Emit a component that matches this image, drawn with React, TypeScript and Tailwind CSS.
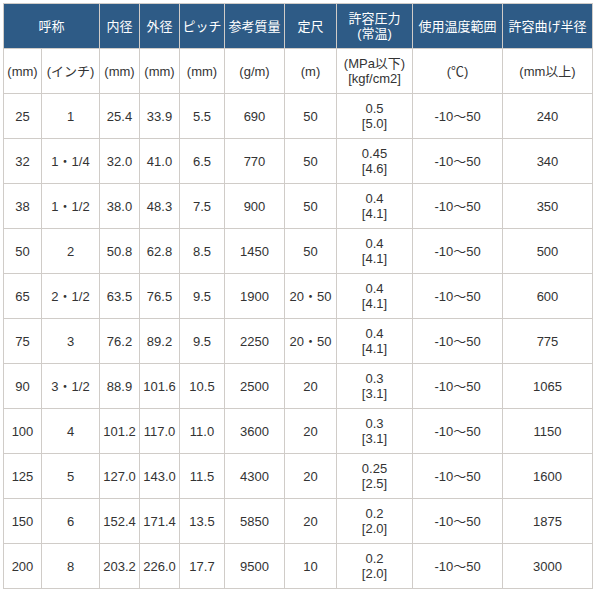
import React from "react";

const rows: [string, string, string, string, string, string, string, string, string, string][] = [
  ["25", "1", "25.4", "33.9", "5.5", "690", "50", "0.5|[5.0]", "-10～50", "240"],
  ["32", "1・1/4", "32.0", "41.0", "6.5", "770", "50", "0.45|[4.6]", "-10～50", "340"],
  ["38", "1・1/2", "38.0", "48.3", "7.5", "900", "50", "0.4|[4.1]", "-10～50", "350"],
  ["50", "2", "50.8", "62.8", "8.5", "1450", "50", "0.4|[4.1]", "-10～50", "500"],
  ["65", "2・1/2", "63.5", "76.5", "9.5", "1900", "20・50", "0.4|[4.1]", "-10～50", "600"],
  ["75", "3", "76.2", "89.2", "9.5", "2250", "20・50", "0.4|[4.1]", "-10～50", "775"],
  ["90", "3・1/2", "88.9", "101.6", "10.5", "2500", "20", "0.3|[3.1]", "-10～50", "1065"],
  ["100", "4", "101.2", "117.0", "11.0", "3600", "20", "0.3|[3.1]", "-10～50", "1150"],
  ["125", "5", "127.0", "143.0", "11.5", "4300", "20", "0.25|[2.5]", "-10～50", "1600"],
  ["150", "6", "152.4", "171.4", "13.5", "5850", "20", "0.2|[2.0]", "-10～50", "1875"],
  ["200", "8", "203.2", "226.0", "17.7", "9500", "10", "0.2|[2.0]", "-10～50", "3000"],
];

const units = ["(mm)", "(インチ)", "(mm)", "(mm)", "(mm)", "(g/m)", "(m)", "(MPa以下)|[kgf/cm2]", "(℃)", "(mm以上)"];

function Cell({ text, head, span }: { text: string; head?: boolean; span?: boolean }) {
  const lines = text.split("|");
  return (
    <div
      className={`flex flex-col items-center justify-center text-center text-[13px] leading-[15px] whitespace-nowrap ${
        head ? "bg-[#2e5b86] text-white" : "bg-white text-[#333]"
      } ${span ? "col-span-2" : ""}`}
    >
      {lines.map((l, i) => (
        <span key={i}>{l}</span>
      ))}
    </div>
  );
}

export default function App() {
  return (
    <div className="p-[3px] bg-white w-[600px] h-[590px]" style={{ fontFamily: '"Liberation Sans", Arial, "Noto Sans CJK JP", sans-serif' }}>
      <div className="grid grid-cols-[37px_57px_39px_39px_44px_59px_51px_75px_89px_89px] auto-rows-[44px] gap-px p-px bg-[#d0ccc8] w-[590px]">
        <Cell head span text="呼称" />
        <Cell head text="内径" />
        <Cell head text="外径" />
        <Cell head text="ピッチ" />
        <Cell head text="参考質量" />
        <Cell head text="定尺" />
        <Cell head text="許容圧力|(常温)" />
        <Cell head text="使用温度範囲" />
        <Cell head text="許容曲げ半径" />
        {units.map((u, i) => (
          <Cell key={"u" + i} text={u} />
        ))}
        {rows.map((r, ri) => r.map((c, ci) => <Cell key={ri + "-" + ci} text={c} />))}
      </div>
    </div>
  );
}
